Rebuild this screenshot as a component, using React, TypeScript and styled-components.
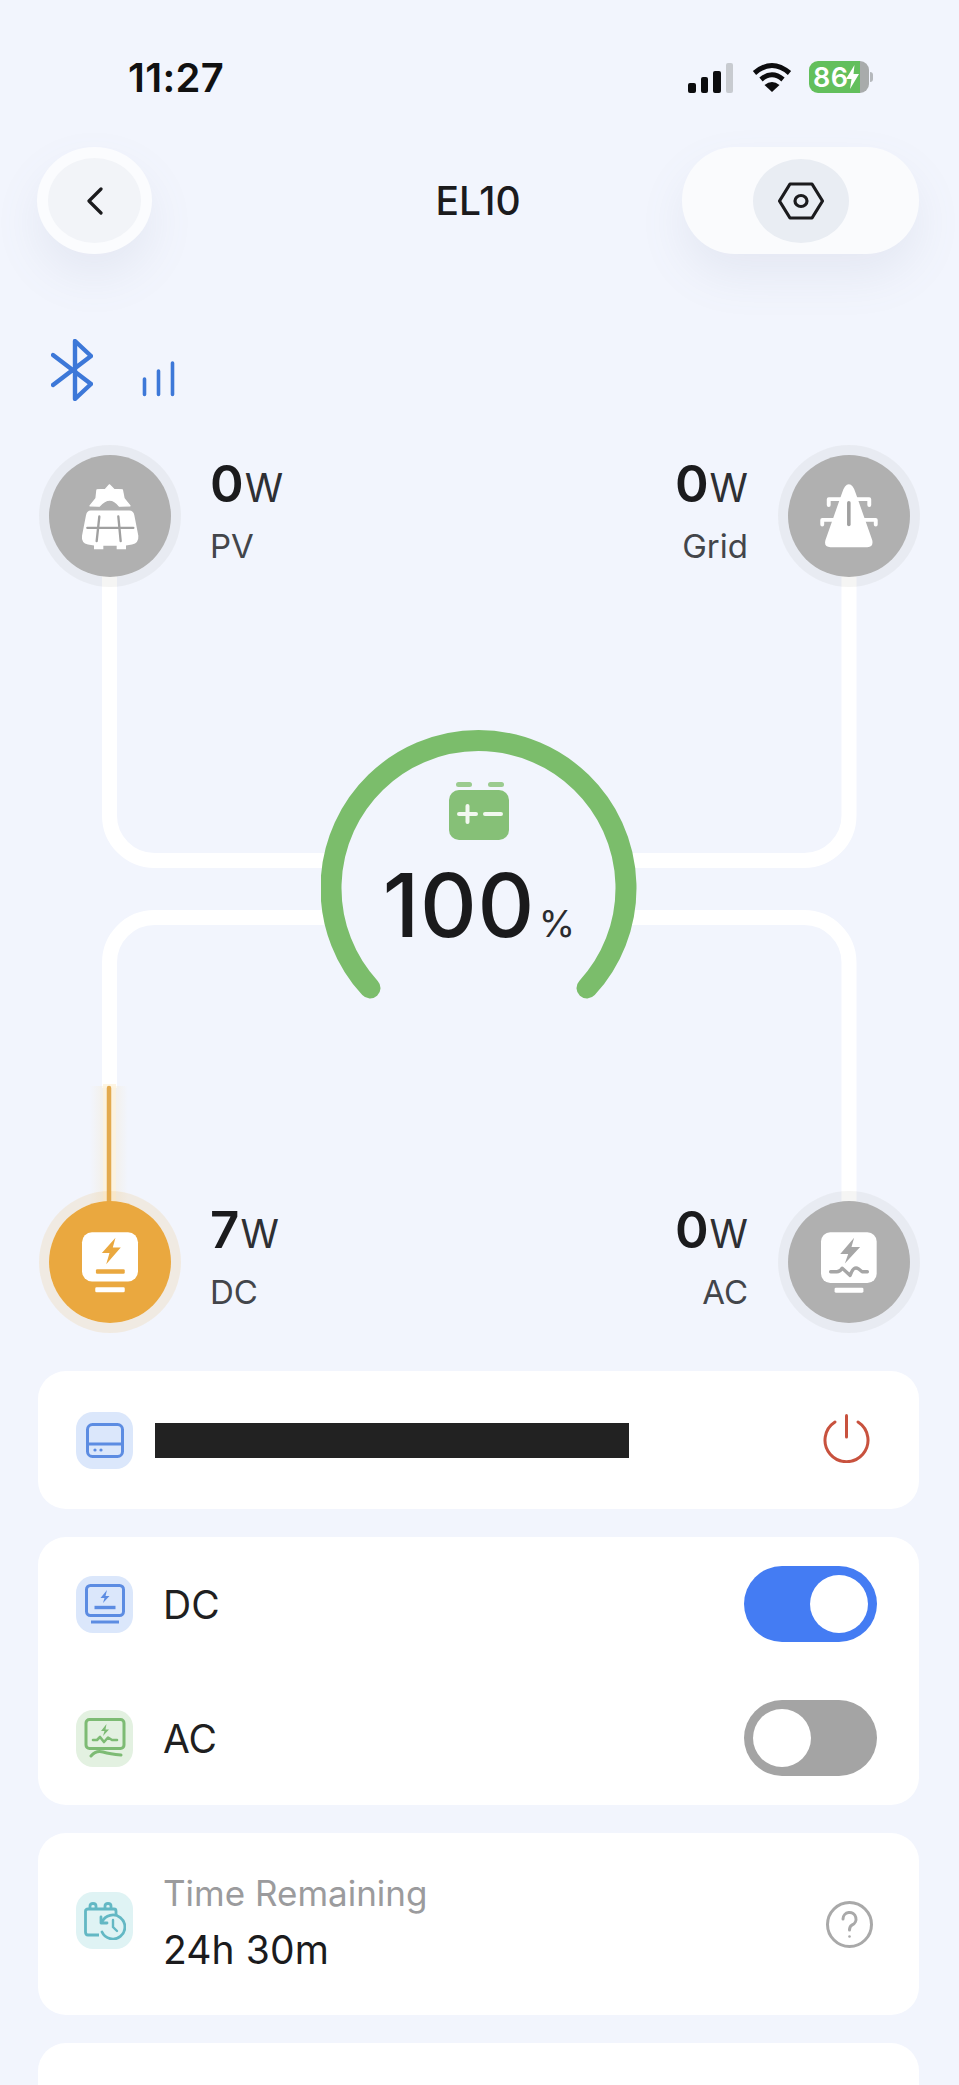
import React from "react";
import styled, { createGlobalStyle } from "styled-components";

const Global = createGlobalStyle`
  html, body { margin: 0; padding: 0; background: #f2f5fd; }
  * { box-sizing: border-box; }
  #root { width: 959px; height: 2085px; overflow: hidden; }
`;

const Page = styled.div`
  width: 959px;
  height: 2085px;
  overflow: hidden;
  background: #f2f5fd;
  color: #1a1a1c;
  font-family: Inter, "Liberation Sans", sans-serif;
`;

const StatusBar = styled.div`
  height: 147px;
  padding: 61px 86px 0 128px;
  display: flex;
  justify-content: space-between;
  align-items: flex-start;
`;

const Clock = styled.div`
  font-size: 40px;
  font-weight: 600;
  line-height: 33px;
  letter-spacing: 0.3px;
  color: #111;
`;

const StatusIcons = styled.div`
  display: flex;
  align-items: center;
  gap: 17px;
  height: 32px;
`;

const Bars = styled.div`
  display: flex;
  align-items: flex-end;
  gap: 5px;
  height: 30px;
  margin-top: 1px;
  margin-right: 2px;
`;

const Bar = styled.span<{ $h: number; $off?: boolean }>`
  width: 7.5px;
  height: ${(p) => p.$h}px;
  border-radius: 2px;
  background: ${(p) => (p.$off ? "#c8cbd0" : "#0c0c0e")};
`;

const Battery = styled.div`
  position: relative;
  width: 60px;
  height: 32px;
  margin-right: 4px;
  border-radius: 9px;
  background: linear-gradient(90deg, #63bf5c 0 85%, #a8abab 85%);
  color: #fff;
  display: flex;
  align-items: center;
  padding-left: 4px;
  font-size: 27px;
  font-weight: 600;
  letter-spacing: 0.4px;
  &::after {
    content: "";
    position: absolute;
    right: -4px;
    top: 11px;
    width: 3px;
    height: 10px;
    border-radius: 0 3px 3px 0;
    background: #b5b8bc;
  }
  svg { margin-left: -2px; }
`;

const Header = styled.header`
  height: 107px;
  padding: 0 40px 0 37px;
  display: grid;
  grid-template-columns: 1fr auto 1fr;
  align-items: center;
`;

const BackButton = styled.div`
  width: 115px;
  height: 107px;
  border-radius: 50%;
  border: 11px solid #fbfcfe;
  background: #f2f4f8;
  box-shadow: 0 22px 46px rgba(120, 130, 160, 0.1);
  display: flex;
  align-items: center;
  justify-content: center;
`;

const Title = styled.h1`
  margin: 0;
  font-size: 39px;
  font-weight: 500;
  color: #1b1b1d;
`;

const SettingsPill = styled.div`
  justify-self: end;
  width: 237px;
  height: 107px;
  border-radius: 53px;
  background: #fafbfd;
  box-shadow: 0 22px 46px rgba(120, 130, 160, 0.1);
  display: flex;
  align-items: center;
  justify-content: center;
`;

const SettingsInner = styled.div`
  width: 96px;
  height: 84px;
  border-radius: 50%;
  background: #e9edf3;
  display: flex;
  align-items: center;
  justify-content: center;
`;

const ConnectionRow = styled.div`
  margin-top: 85px;
  height: 62px;
  padding-left: 51px;
  display: flex;
  align-items: flex-end;
  gap: 49px;
`;

const Diagram = styled.section`
  position: relative;
  margin-top: 44px;
  height: 888px;
  padding: 0 39px;
  display: flex;
  flex-direction: column;
  justify-content: space-between;
`;

const Wires = styled.svg`
  position: absolute;
  left: 0;
  top: 0;
`;

const NodeRow = styled.div`
  position: relative;
  display: flex;
  justify-content: space-between;
  height: 142px;
`;

const NodeGroup = styled.div<{ $reverse?: boolean }>`
  display: flex;
  flex-direction: ${(p) => (p.$reverse ? "row-reverse" : "row")};
  gap: ${(p) => (p.$reverse ? 30 : 29)}px;
`;

const Node = styled.div<{ $active?: boolean }>`
  width: 142px;
  height: 142px;
  border-radius: 50%;
  border: 10px solid ${(p) => (p.$active ? "rgba(233,169,63,0.14)" : "rgba(90,85,70,0.06)")};
  background: ${(p) => (p.$active ? "#eaa83f" : "#b0b0b0")};
  background-clip: padding-box;
  display: flex;
  align-items: center;
  justify-content: center;
`;

const Reading = styled.div<{ $right?: boolean }>`
  display: flex;
  flex-direction: column;
  align-items: ${(p) => (p.$right ? "flex-end" : "flex-start")};
  padding-top: 13px;
`;

const Value = styled.div`
  display: flex;
  align-items: baseline;
  gap: 1px;
  line-height: 52px;
  font-size: 51px;
  font-weight: 600;
  color: #1b1b1d;
`;

const Unit = styled.span`
  font-size: 39px;
  font-weight: 400;
  color: #2e2f33;
`;

const NodeLabel = styled.div`
  margin-top: 12px;
  font-size: 33px;
  line-height: 40px;
  color: #43454a;
`;

const Gauge = styled.div`
  position: absolute;
  left: 321px;
  top: 285px;
  width: 316px;
  height: 282px;
`;

const GaugeContent = styled.div`
  position: absolute;
  left: 0;
  right: 0;
  top: 52px;
  display: flex;
  flex-direction: column;
  align-items: center;
`;

const Percent = styled.div`
  margin-top: 21px;
  display: flex;
  align-items: baseline;
  gap: 4px;
  font-size: 88px;
  line-height: 88px;
  font-weight: 550;
  letter-spacing: 0.6px;
  color: #1a1a1c;
`;

const PercentSign = styled.span`
  font-size: 37px;
  font-weight: 400;
  letter-spacing: 0;
  color: #2b2b2e;
`;

const Cards = styled.div`
  margin-top: 38px;
  padding: 0 40px 0 38px;
  display: flex;
  flex-direction: column;
  gap: 28px;
`;

const Card = styled.div<{ $h: number }>`
  height: ${(p) => p.$h}px;
  background: #fff;
  border-radius: 28px;
  display: flex;
  flex-direction: column;
  flex-shrink: 0;
`;

const Row = styled.div<{ $pr?: number }>`
  flex: 1;
  padding: 0 ${(p) => p.$pr ?? 42}px 0 38px;
  display: flex;
  align-items: center;
`;

const IconBox = styled.div<{ $bg: string; $up?: number }>`
  width: 57px;
  height: 57px;
  margin-top: ${(p) => -(p.$up ?? 0)}px;
  border-radius: 17px;
  background: ${(p) => p.$bg};
  display: flex;
  align-items: center;
  justify-content: center;
  flex-shrink: 0;
`;

const Redaction = styled.div`
  margin-left: 22px;
  width: 474px;
  height: 35px;
  background: #222;
`;

const RowLabel = styled.div`
  margin-left: 30px;
  flex: 1;
  font-size: 39px;
  color: #1f1f21;
`;

const Toggle = styled.div<{ $on?: boolean }>`
  width: 133px;
  height: 76px;
  border-radius: 38px;
  padding: 9px;
  background: ${(p) => (p.$on ? "#447cf3" : "#a4a4a4")};
  display: flex;
  justify-content: ${(p) => (p.$on ? "flex-end" : "flex-start")};
`;

const Knob = styled.span`
  width: 58px;
  height: 58px;
  border-radius: 50%;
  background: #fff;
`;

const Spacer = styled.div`
  flex: 1;
`;

const PowerGlyph = styled.svg`
  margin-top: -4px;
`;

const TimeText = styled.div`
  margin-left: 30px;
  margin-top: -3px;
  flex: 1;
  display: flex;
  flex-direction: column;
  gap: 13px;
`;

const TimeCaption = styled.div`
  font-size: 35px;
  line-height: 42px;
  color: #9b9b9d;
`;

const TimeValue = styled.div`
  font-size: 39px;
  line-height: 46px;
  letter-spacing: 0.1px;
  color: #1b1b1d;
`;

const WIRE = "#ffffff";

const PanelIcon = () => (
  <svg width="60" height="67" viewBox="240 180 180 200" fill="none">
    <path d="M270 248 L288 226 L291 200 L316 199 L328 185 L342 199 L367 200 L372 226 L390 248 L358 249 Q330 212 298 249 Z" fill="#fff" stroke="#fff" strokeWidth="4" strokeLinejoin="round" />
    <path d="M272 262 H388 Q400 262 403 276 L415 338 Q417 360 396 364 L378 367 V378 H350 V368 H310 V378 H282 V367 L264 364 Q243 360 246 338 L258 276 Q261 262 272 262 Z" fill="#fff" />
    <path d="M262 314 H400 M298 280 L290 354 M355 280 L362 354" stroke="#a0a0a0" strokeWidth="7" strokeLinecap="round" />
  </svg>
);

const PylonIcon = () => (
  <svg width="60" height="67" viewBox="535 185 185 205" fill="none">
    <path d="M627 188 Q640 188 648 215 L699 360 Q704 382 684 382 H570 Q549 382 555 360 L606 215 Q614 188 627 188 Z" fill="#fff" />
    <path d="M565 252 V234 H690 V252 M545 312 V298 H710 V312" stroke="#fff" strokeWidth="12" strokeLinecap="round" strokeLinejoin="round" />
    <path d="M627 245 V312" stroke="#a0a0a0" strokeWidth="11" strokeLinecap="round" />
  </svg>
);

const DcIcon = () => (
  <svg width="58" height="63" viewBox="240 508 175 190" fill="none">
    <rect x="243" y="512" width="169" height="148" rx="30" fill="#fff" />
    <path d="M344 528 L303 574 H326 L316 608 L360 558 H336 Z" fill="#eaa83f" />
    <rect x="285" y="623" width="87" height="14" rx="4" fill="#eaa83f" />
    <rect x="283" y="678" width="89" height="15" rx="4" fill="#fff" />
  </svg>
);

const AcIcon = () => (
  <svg width="58" height="63" viewBox="539 208 175 190" fill="none">
    <rect x="542" y="212" width="168" height="153" rx="28" fill="#fff" />
    <path d="M642 228 L600 277 H624 L614 306 L660 256 H634 Z" fill="#a6a6a6" />
    <path d="M571 331 H590 Q600 331 606 320 L630 342 Q640 312 655 322 L666 331 H682" stroke="#a6a6a6" strokeWidth="10" strokeLinecap="round" strokeLinejoin="round" />
    <rect x="583" y="379" width="87" height="15" rx="4" fill="#fff" />
  </svg>
);

const BLUE = "#5c8ce2";
const GREEN = "#7dbb74";
const TEAL = "#63b8c4";

const DriveIcon = () => (
  <svg width="38" height="35" viewBox="0 0 38 35" fill="none" stroke={BLUE} strokeWidth="3">
    <rect x="1.5" y="1.5" width="35" height="32" rx="5" />
    <path d="M1.5 21 H36.5" />
    <circle cx="9" cy="27" r="1.6" fill={BLUE} stroke="none" />
    <circle cx="15" cy="27" r="1.6" fill={BLUE} stroke="none" />
  </svg>
);

const DcSmallIcon = () => (
  <svg width="40" height="40" viewBox="0 0 40 40" fill="none" stroke={BLUE} strokeWidth="3">
    <rect x="1.5" y="1.5" width="37" height="30" rx="4" />
    <path d="M22 6 L15.5 14 H19.5 L18 19 L24.5 12 H20.5 Z" fill={BLUE} stroke="none" />
    <path d="M9.5 23.5 H30.5" strokeWidth="3.4" />
    <path d="M6 38 H34" />
  </svg>
);

const AcSmallIcon = () => (
  <svg width="42" height="40" viewBox="0 0 42 40" fill="none" stroke={GREEN} strokeWidth="3">
    <rect x="2" y="1.5" width="38" height="29" rx="3.5" />
    <path d="M22.5 6 L17 13 H20.5 L19 18 L25 11.5 H21.5 Z" fill={GREEN} stroke="none" />
    <path d="M9 22 H13 L16 19 L20 24 L24 19.5 L28 22 H33" strokeWidth="2.6" strokeLinecap="round" strokeLinejoin="round" />
    <path d="M7 38 Q12 32 19 34 T37 37" strokeLinecap="round" />
  </svg>
);

const CalendarIcon = () => (
  <svg width="42" height="38" viewBox="0 0 42 38" fill="none" stroke={TEAL} strokeWidth="2.8">
    <path d="M15 33 H4 Q1.5 33 1.5 30 V9 Q1.5 7 4 7 H30 Q32 7 32 9 V13" />
    <path d="M6 7 V4 Q6 1.5 9 1.5 Q12 1.5 12 4 V7 M21 7 V4 Q21 1.5 24 1.5 Q27 1.5 27 4 V7" />
    <path d="M18 20 A12 12 0 1 1 18 30" strokeLinecap="round" />
    <path d="M17 15 L17 21 L23 21" strokeLinecap="round" strokeLinejoin="round" />
    <path d="M29 18 V25 L33 29" strokeWidth="2.4" strokeLinecap="round" />
  </svg>
);

const r = 147.5;
const arcPath = `M49 258 A${r} ${r} 0 1 1 266 258`;

export default function App() {
  return (
    <Page>
      <Global />
      <StatusBar>
        <Clock>11:27</Clock>
        <StatusIcons>
          <Bars>
            <Bar $h={10} />
            <Bar $h={16} />
            <Bar $h={22} />
            <Bar $h={30} $off />
          </Bars>
          <svg width="40" height="30" viewBox="0 0 40 30" fill="none" stroke="#0c0c0e" strokeWidth="5">
            <path d="M2.5 11 Q20 -4 37.5 11" />
            <path d="M9 17.5 Q20 8 31 17.5" />
            <path d="M20 30 L12.5 23 Q20 17 27.5 23 Z" fill="#0c0c0e" stroke="none" />
          </svg>
          <Battery>
            86
            <svg width="13" height="24" viewBox="0 0 13 24">
              <path d="M8.5 0 L0 14 H5.5 L4 24 L13 9 H7.5 Z" fill="#fff" />
            </svg>
          </Battery>
        </StatusIcons>
      </StatusBar>

      <Header>
        <BackButton>
          <svg width="18" height="28" viewBox="0 0 18 28" fill="none" stroke="#1b1b1d" strokeWidth="3.2" strokeLinecap="round" strokeLinejoin="round">
            <path d="M15 2 L3 14 L15 26" />
          </svg>
        </BackButton>
        <Title>EL10</Title>
        <SettingsPill>
          <SettingsInner>
            <svg width="46" height="38" viewBox="0 0 46 38" fill="none" stroke="#1b1b1d" strokeWidth="3.2" strokeLinejoin="round">
              <path d="M12 2 H34 L44.5 19 L34 36 H12 L1.5 19 Z" />
              <ellipse cx="23" cy="19" rx="6" ry="5.5" />
            </svg>
          </SettingsInner>
        </SettingsPill>
      </Header>

      <ConnectionRow>
        <svg width="42" height="62" viewBox="0 0 42 62" fill="none" stroke="#3d78d8" strokeWidth="4.4" strokeLinecap="round" strokeLinejoin="round">
          <path d="M2 16 L40 45 L24 60 V2 L40 17 L2 46" />
        </svg>
        <svg width="33" height="36" viewBox="0 0 33 36" fill="none" stroke="#3d78d8" strokeWidth="3.6" strokeLinecap="round" style={{ marginBottom: 4 }}>
          <path d="M2.5 18 V33.5 M16.5 10 V33.5 M30.5 2 V33.5" />
        </svg>
      </ConnectionRow>

      <Diagram>
        <Wires width="959" height="888" viewBox="0 0 959 888" fill="none">
          <defs>
            <linearGradient id="glow" x1="0" y1="0" x2="1" y2="0">
              <stop offset="0" stopColor="#f5e6c4" stopOpacity="0" />
              <stop offset="0.5" stopColor="#f5e6c4" stopOpacity="0.45" />
              <stop offset="1" stopColor="#f5e6c4" stopOpacity="0" />
            </linearGradient>
          </defs>
          <g stroke={WIRE} strokeWidth="15">
            <path d="M109.5 130 V370.5 A45 45 0 0 0 154.5 415.5 H336" />
            <path d="M849 130 V370.5 A45 45 0 0 1 804 415.5 H622" />
            <path d="M109.5 643 V517.5 A45 45 0 0 1 154.5 472.5 H336" />
            <path d="M849 770 V517.5 A45 45 0 0 0 804 472.5 H622" />
          </g>
          <rect x="90" y="641" width="38" height="120" fill="url(#glow)" />
          <rect x="103" y="639" width="13" height="120" fill="#fdf3dd" opacity="0.8" />
          <path d="M109 643 V759" stroke="#e3aa4e" strokeWidth="4.5" strokeLinecap="round" />
        </Wires>

        <NodeRow>
          <NodeGroup>
            <Node><PanelIcon /></Node>
            <Reading>
              <Value>0<Unit>W</Unit></Value>
              <NodeLabel>PV</NodeLabel>
            </Reading>
          </NodeGroup>
          <NodeGroup $reverse>
            <Node><PylonIcon /></Node>
            <Reading $right>
              <Value>0<Unit>W</Unit></Value>
              <NodeLabel>Grid</NodeLabel>
            </Reading>
          </NodeGroup>
        </NodeRow>

        <Gauge>
          <svg width="316" height="282" viewBox="0 0 316 282" fill="none">
            <path d={arcPath} stroke="#7bbd6b" strokeWidth="21" strokeLinecap="round" />
          </svg>
          <GaugeContent>
            <svg width="60" height="58" viewBox="0 0 60 58" fill="none">
              <rect x="7" y="0" width="16" height="5" rx="2.5" fill="#9bcb8f" />
              <rect x="39" y="0" width="16" height="5" rx="2.5" fill="#9bcb8f" />
              <rect x="0" y="8" width="60" height="50" rx="10" fill="#86c077" />
              <path d="M10 32 H27 M18.5 24 V40 M36 32 H52" stroke="#f2f8f0" strokeWidth="4" strokeLinecap="round" />
            </svg>
            <Percent>
              100<PercentSign>%</PercentSign>
            </Percent>
          </GaugeContent>
        </Gauge>

        <NodeRow>
          <NodeGroup>
            <Node $active><DcIcon /></Node>
            <Reading>
              <Value>7<Unit>W</Unit></Value>
              <NodeLabel>DC</NodeLabel>
            </Reading>
          </NodeGroup>
          <NodeGroup $reverse>
            <Node><AcIcon /></Node>
            <Reading $right>
              <Value>0<Unit>W</Unit></Value>
              <NodeLabel>AC</NodeLabel>
            </Reading>
          </NodeGroup>
        </NodeRow>
      </Diagram>

      <Cards>
        <Card $h={138}>
          <Row $pr={49}>
            <IconBox $bg="#dbe7fb"><DriveIcon /></IconBox>
            <Redaction />
            <Spacer />
            <PowerGlyph width="47" height="49" viewBox="0 0 47 49" fill="none" stroke="#c8523e" strokeWidth="3" strokeLinecap="round">
              <path d="M23.5 1.5 V23" />
              <path d="M12 8 A21.5 21.5 0 1 0 35 8" />
            </PowerGlyph>
          </Row>
        </Card>
        <Card $h={268}>
          <Row>
            <IconBox $bg="#dbe7fb"><DcSmallIcon /></IconBox>
            <RowLabel>DC</RowLabel>
            <Toggle $on><Knob /></Toggle>
          </Row>
          <Row>
            <IconBox $bg="#e3f1e1"><AcSmallIcon /></IconBox>
            <RowLabel>AC</RowLabel>
            <Toggle><Knob /></Toggle>
          </Row>
        </Card>
        <Card $h={182}>
          <Row $pr={46}>
            <IconBox $bg="#dff3f4" $up={7}><CalendarIcon /></IconBox>
            <TimeText>
              <TimeCaption>Time Remaining</TimeCaption>
              <TimeValue>24h 30m</TimeValue>
            </TimeText>
            <svg width="47" height="47" viewBox="0 0 47 47" fill="none" stroke="#a9a9a9" strokeWidth="3" strokeLinecap="round">
              <circle cx="23.5" cy="23.5" r="22" />
              <path d="M17 18 A6.5 6.5 0 1 1 26 24 Q23.5 25.5 23.5 29" />
              <circle cx="23.5" cy="35.5" r="1.3" fill="#a9a9a9" stroke="none" />
            </svg>
          </Row>
        </Card>
        <Card $h={120} />
      </Cards>
    </Page>
  );
}
